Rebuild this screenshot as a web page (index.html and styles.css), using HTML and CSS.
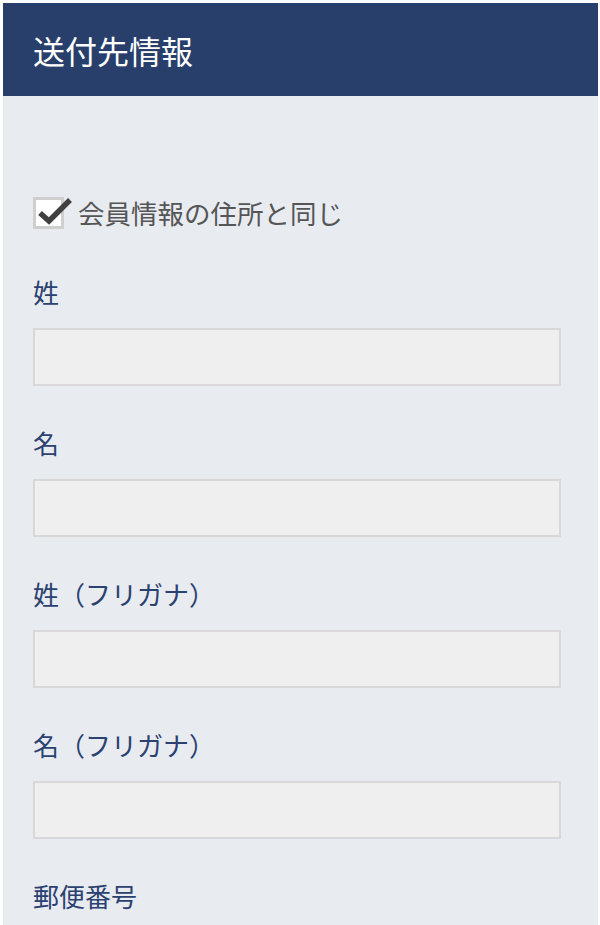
FILE: index.html
```html
<!DOCTYPE html>
<html lang="ja">
<head>
<meta charset="utf-8">
<title>送付先情報</title>
<link rel="stylesheet" href="styles.css">
</head>
<body>
<div class="page">
  <header class="header">送付先情報</header>
  <main class="content">
    <label class="check-row">
      <span class="check-box">
        <svg class="check-mark" width="40" height="34" viewBox="0 0 40 34" aria-hidden="true">
          <path d="M4 17 L13 25 L34 4" fill="none" stroke="#404040" stroke-width="5.5" stroke-linecap="butt" stroke-linejoin="miter"/>
        </svg>
      </span>
      <span class="check-label">会員情報の住所と同じ</span>
    </label>

    <div class="field">
      <div class="field-label">姓</div>
      <input class="field-input" type="text">
    </div>
    <div class="field">
      <div class="field-label">名</div>
      <input class="field-input" type="text">
    </div>
    <div class="field">
      <div class="field-label">姓（フリガナ）</div>
      <input class="field-input" type="text">
    </div>
    <div class="field">
      <div class="field-label">名（フリガナ）</div>
      <input class="field-input" type="text">
    </div>
    <div class="field">
      <div class="field-label">郵便番号</div>
    </div>
  </main>
</div>
</body>
</html>
```
FILE: styles.css
```css
html, body {
  margin: 0;
  padding: 0;
  background: #ffffff;
}
body {
  font-family: "Noto Sans CJK JP", "Noto Sans", sans-serif;
}
.page {
  margin: 3px 2px 0 3px;
  background: #e8ebf0;
  height: 922px;
  overflow: hidden;
}
.header {
  height: 93px;
  background: #283f6b;
  color: #ffffff;
  font-size: 32px;
  display: flex;
  align-items: center;
  padding-left: 30px;
  box-sizing: border-box;
}
.content {
  padding: 101px 37px 0 30px;
}
.check-row {
  display: flex;
  align-items: center;
  height: 32px;
  gap: 14px;
  margin-bottom: 43px;
}
.check-box {
  position: relative;
  width: 31px;
  height: 32px;
  box-sizing: border-box;
  border: 3px solid #cfcfcf;
  background: #ffffff;
  flex: none;
}
.check-mark {
  position: absolute;
  left: 0;
  top: -4px;
}
.check-label {
  font-size: 26.5px;
  color: #555555;
  line-height: 32px;
}
.field-label {
  font-size: 26px;
  line-height: 39px;
  color: #2b4170;
  margin-bottom: 17px;
}
.field-input {
  display: block;
  width: 100%;
  height: 58px;
  box-sizing: border-box;
  border: 2px solid #d8d8d8;
  background: #efefef;
  margin: 0 0 37px 0;
  padding: 0 10px;
  font-size: 24px;
  outline: none;
  border-radius: 0;
}
```
